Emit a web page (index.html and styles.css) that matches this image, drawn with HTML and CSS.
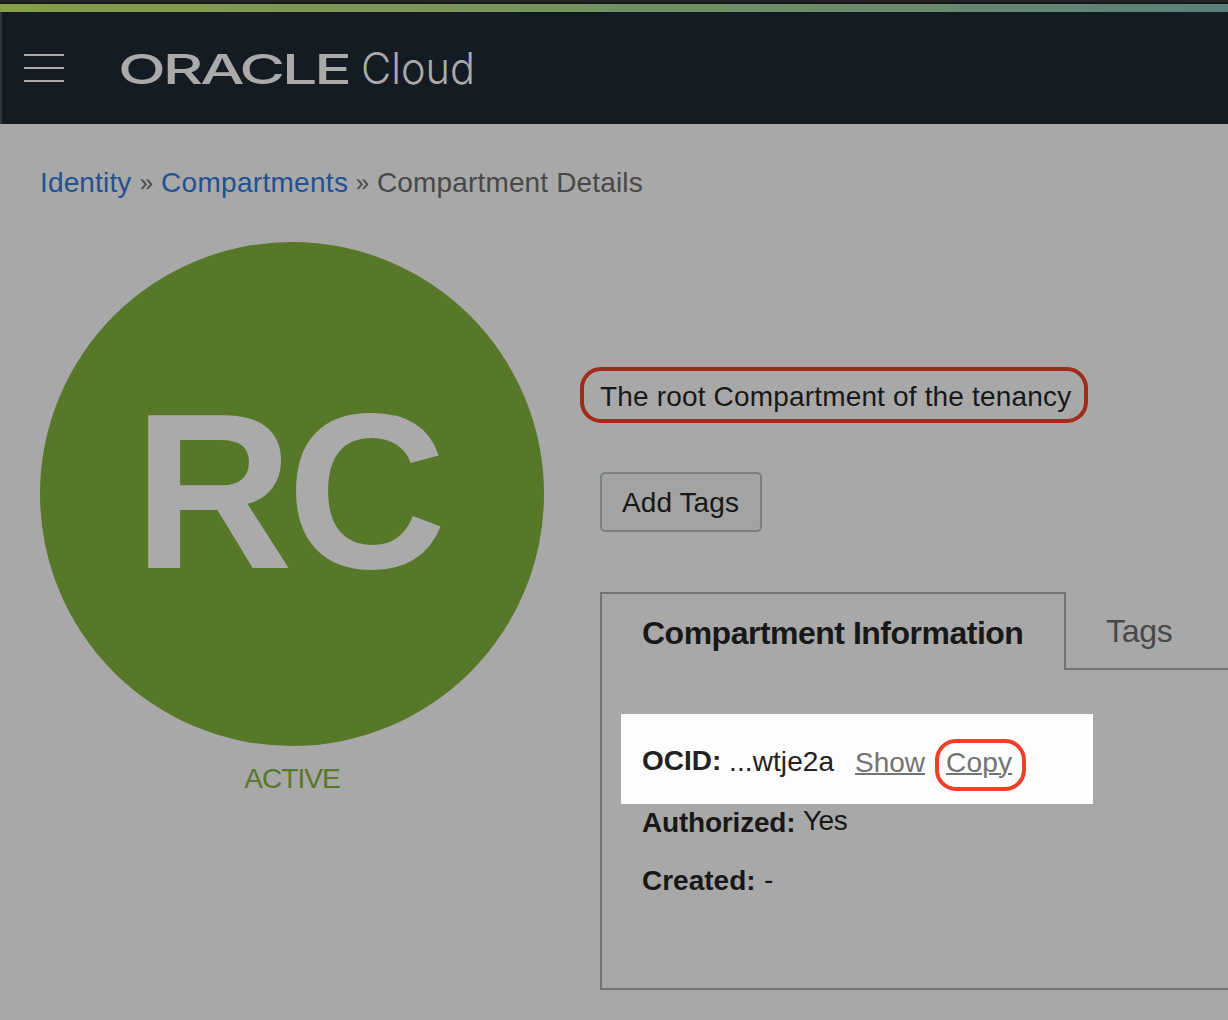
FILE: index.html
```html
<!DOCTYPE html>
<html lang="en">
<head>
<meta charset="utf-8">
<title>Compartment Details</title>
<link rel="stylesheet" href="styles.css">
</head>
<body>
<div class="window-edge"></div>
<div class="accent-bar"></div>
<header class="topbar">
  <svg class="menu-icon" width="40" height="28" viewBox="0 0 40 28" aria-hidden="true">
    <path d="M0 1H40M0 14H40M0 27H40" stroke="#aaaaaa" stroke-width="2"/>
  </svg>
  <svg class="brand" width="360" height="60" viewBox="0 0 360 60" role="img" aria-label="Oracle Cloud">
    <text class="brand-oracle" x="-1" y="46" textLength="231" lengthAdjust="spacingAndGlyphs">ORACLE</text>
    <text class="brand-cloud" x="242" y="46" textLength="114" lengthAdjust="spacingAndGlyphs">Cloud</text>
  </svg>
</header>
<main class="page">
  <nav class="breadcrumb">
    <a class="crumb-link crumb-identity" href="#">Identity</a>
    <span class="crumb-sep">»</span>
    <a class="crumb-link crumb-compartments" href="#">Compartments</a>
    <span class="crumb-sep">»</span>
    <span class="crumb-current">Compartment Details</span>
  </nav>
  <div class="details">
    <aside class="status">
      <div class="avatar"><span class="avatar-text">RC</span></div>
      <div class="state">ACTIVE</div>
    </aside>
    <section class="content">
      <div class="description">The root Compartment of the tenancy</div>
      <button class="add-tags" type="button">Add Tags</button>
      <div class="tabs">
        <div class="tab tab-active">Compartment Information</div>
        <div class="tab tab-idle">Tags</div>
      </div>
      <div class="panel">
        <div class="row row-ocid">
          <span class="label label-ocid">OCID:</span>
          <span class="value value-ocid">...wtje2a</span>
          <a class="action action-show" href="#">Show</a>
          <span class="ring"><a class="action action-copy" href="#">Copy</a></span>
        </div>
        <div class="row row-authorized">
          <span class="label label-authorized">Authorized:</span>
          <span class="value value-raised">Yes</span>
        </div>
        <div class="row row-created">
          <span class="label label-created">Created:</span>
          <span class="value value-created">-</span>
        </div>
      </div>
    </section>
  </div>
</main>
</body>
</html>
```
FILE: styles.css
```css
* { box-sizing: border-box; }

body {
  margin: 0;
  height: 1020px;
  overflow: hidden;
  background: #a8a8a8;
  color: #181818;
  font: 28px/40px "Liberation Sans", Arial, sans-serif;
  white-space: nowrap;
}

.window-edge {
  height: 4px;
  background: #181818;
  border-top: 2px solid #232427;
}

.accent-bar {
  height: 8px;
  background: linear-gradient(90deg, #849f47, #6a8b6c 73%, #5b7f7b);
}

.topbar {
  display: flex;
  align-items: center;
  height: 112px;
  padding-left: 22px;
  background: #141b22;
  border-left: 2px solid #30353b;
}

.brand { margin-left: 55px; overflow: visible; }

.brand-oracle {
  font: 500 41.5px Inter, sans-serif;
  letter-spacing: -2px;
  fill: #aaaaaa;
}

.brand-cloud {
  font: 300 44px Inter, sans-serif;
  fill: #aaaaaa;
}

.page { padding: 39px 0 0 40px; }

.breadcrumb {
  display: flex;
  height: 40px;
  color: #484848;
  letter-spacing: 0.15px;
}

.crumb-link { color: #225192; text-decoration: none; }
.crumb-identity { width: 92px; }
.crumb-compartments { width: 187px; letter-spacing: 0.3px; }
.crumb-sep { width: 29px; text-align: center; font-size: 24px; }

.details { display: flex; gap: 56px; margin-top: 39px; }

.status { flex: none; width: 504px; }

.avatar {
  display: flex;
  align-items: center;
  justify-content: center;
  height: 504px;
  padding: 0 10px 5px 0;
  border-radius: 50%;
  background: #577729;
}

.avatar-text {
  color: #aaaaaa;
  font-weight: bold;
  font-size: 221px;
  line-height: 1;
  letter-spacing: -6px;
}

.state {
  margin-top: 13px;
  text-align: center;
  color: #577729;
  letter-spacing: -0.9px;
}

.content { flex: 1; min-width: 0; padding-top: 125px; }

.description {
  width: 508px;
  height: 56px;
  margin-left: -20px;
  padding-left: 16px;
  border: 4px solid #a12b1a;
  border-radius: 21px;
  line-height: 52px;
  letter-spacing: 0.17px;
}

.add-tags {
  display: block;
  width: 162px;
  height: 60px;
  margin-top: 49px;
  padding: 2px 1px 0 0;
  border: 2px solid #7b8083;
  border-radius: 5px;
  background: #a3a3a3;
  color: #181818;
  font: inherit;
  letter-spacing: 0.1px;
}

.tabs { display: flex; height: 78px; margin-top: 60px; font-size: 32px; }

.tab-active {
  width: 466px;
  padding: 19px 0 0 40px;
  border: 2px solid #737373;
  border-bottom: 0;
  font-weight: bold;
  letter-spacing: -0.5px;
}

.tab-idle {
  flex: 1;
  padding: 19px 0 0 40px;
  border-bottom: 2px solid #737373;
  color: #484848;
  letter-spacing: -0.3px;
}

.panel {
  height: 320px;
  padding: 44px 0 0 19px;
  border: solid #737373;
  border-width: 0 0 2px 2px;
}

.row { display: flex; align-items: center; height: 36px; padding: 2px 0 0 21px; }

.row-ocid {
  width: 472px;
  height: 90px;
  padding-top: 4px;
  background: #fdfdfd;
  color: #222222;
}

.row-created { margin-top: 22px; }

.label { font-weight: bold; }
.label-ocid { width: 87px; }
.label-authorized { width: 161px; letter-spacing: -0.2px; }
.label-created { width: 122px; }

.value-ocid { width: 126px; padding-top: 2px; letter-spacing: 0.1px; }
.value-raised { padding-bottom: 4px; letter-spacing: -0.5px; }
.value-created { padding-bottom: 3px; }

.action {
  color: #737373;
  text-decoration: underline;
  text-decoration-thickness: 2px;
}

.action-show { width: 80px; padding-top: 4px; }

.ring {
  width: 91px;
  height: 52px;
  margin-top: 8px;
  padding-left: 7px;
  border: 4px solid #ee4026;
  border-radius: 21px;
  line-height: 40px;
  letter-spacing: 0.2px;
}
```
